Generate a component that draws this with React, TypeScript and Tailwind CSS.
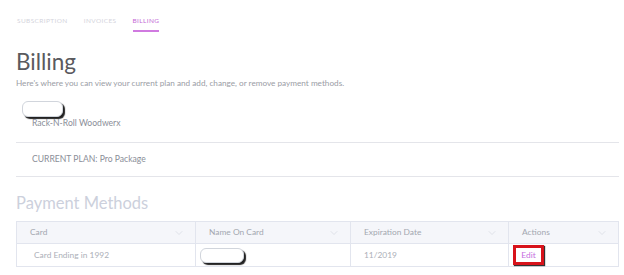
import { ChevronDown } from 'lucide-react';

const columns = [
  { label: 'Card', width: 'w-[178px]' },
  { label: 'Name On Card', width: 'w-[155px]' },
  { label: 'Expiration Date', width: 'w-[158px]' },
  { label: 'Actions', width: 'flex-1' },
];

function Redacted({ className }: { className?: string }) {
  return (
    <div
      className={`h-[15px] w-[41px] rounded-[6px] border border-gray-300 bg-white shadow-[2px_2px_1px_#222] ${className ?? ''}`}
    />
  );
}

export default function App() {
  return (
    <div className="h-[275px] w-[624px] bg-white pl-4 pr-[5px] font-['Lato',sans-serif] text-gray-500">
      <nav className="flex h-[32px] items-end gap-[16px] pl-px text-[6.5px] tracking-[0.06em]">
        <span className="pb-[6px] text-[#d4d4dc]">SUBSCRIPTION</span>
        <span className="pb-[6px] text-[#d4d4dc]">INVOICES</span>
        <span className="border-b-2 border-[#d07ae0] pb-[4px] text-[#c46ad6]">BILLING</span>
      </nav>

      <h1 className="mt-[17px] h-[26px] text-[22.5px] leading-[26px] text-[#5a5a5e]">Billing</h1>
      <p className="mt-[1px] text-[8.2px] leading-[14px] text-[#9a9da5]">
        Here's where you can view your current plan and add, change, or remove payment methods.
      </p>

      <div className="mt-[11px] pl-[6px]">
        <Redacted className="h-[16px]" />
      </div>
      <div className="-mt-[1px] h-[27px] border-b border-[#e4e5ea] pl-4 text-[8.6px] leading-[14px] text-[#8a8e98]">
        Rack-N-Roll Woodwerx
      </div>
      <div className="flex h-[34px] items-center border-b border-[#e4e5ea] pl-4 text-[8.6px] text-[#8a8e98]">
        CURRENT PLAN: Pro Package
      </div>

      <h2 className="mt-[15px] text-[16.5px] leading-[22px] text-[#ccd0dc]">Payment Methods</h2>

      <div className="mt-[7px] border border-[#e2e5ee] text-[8.4px]">
        <div className="flex h-[22px] border-b border-[#e2e5ee] bg-[#f5f6fa] text-[#a3a7b0]">
          {columns.map((c, i) => (
            <div
              key={c.label}
              className={`flex items-center justify-between pl-[13px] pr-[8px] ${c.width} ${i > 0 ? 'border-l border-[#e2e5ee]' : ''}`}
            >
              <span>{c.label}</span>
              <ChevronDown className="h-[12px] w-[16px] text-[#c9ccd6]" strokeWidth={1} />
            </div>
          ))}
        </div>
        <div className="flex h-[22px] text-[#acafb8]">
          <div className="flex w-[178px] items-center pl-[17px]">Card Ending in 1992</div>
          <div className="flex w-[155px] items-center border-l border-[#e2e5ee] pl-[4px]">
            <Redacted className="h-[13px] w-[44px]" />
          </div>
          <div className="flex w-[158px] items-center border-l border-[#e2e5ee] pl-[13px]">11/2019</div>
          <div className="flex flex-1 items-center border-l border-[#e2e5ee] pl-[4px]">
            <span className="flex h-[20px] w-[31px] items-center justify-center border-[3px] border-[#d8131b] text-[#c56ee0] shadow-[1px_1px_1px_#333]">
              Edit
            </span>
          </div>
        </div>
      </div>
    </div>
  );
}
